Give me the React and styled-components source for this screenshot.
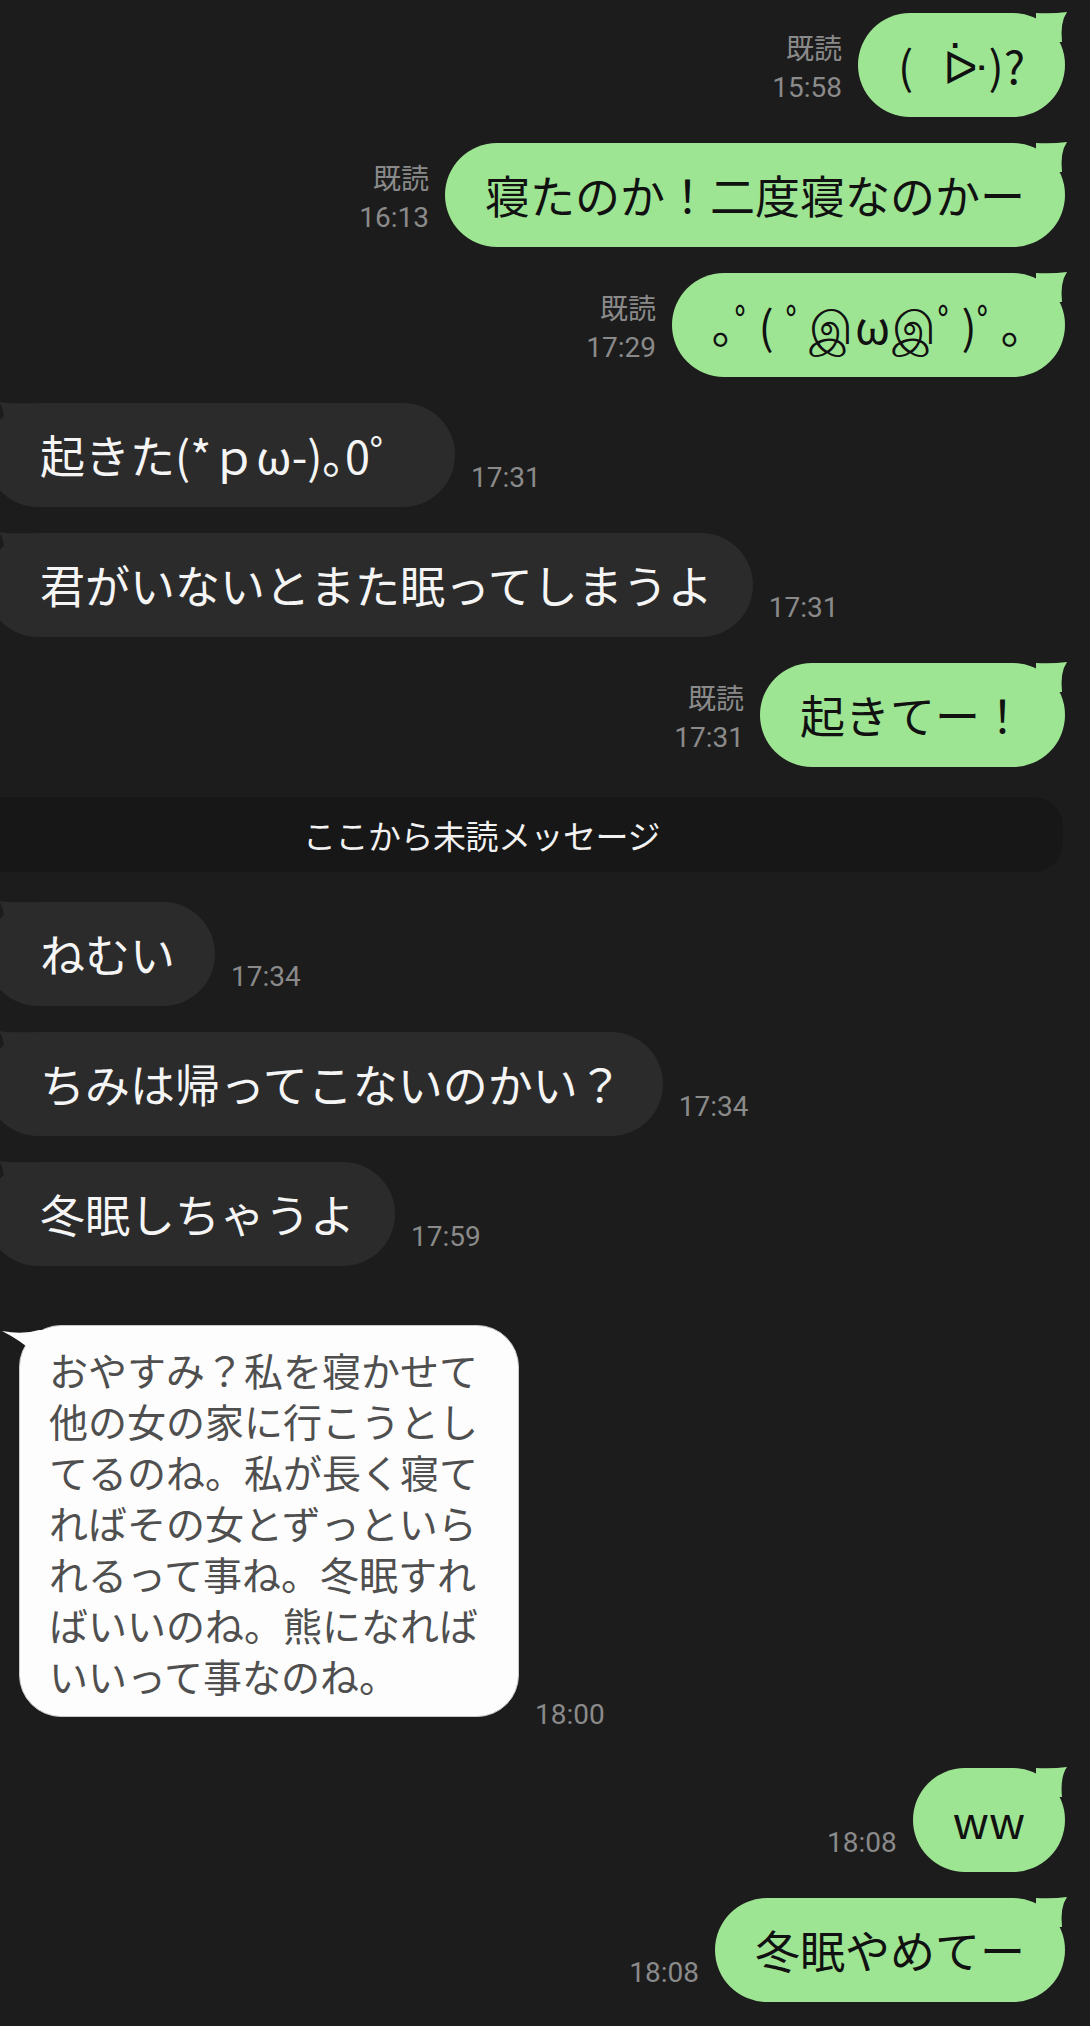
import React from 'react';
import styled, { createGlobalStyle } from 'styled-components';

const GlobalStyle = createGlobalStyle`
  html, body {
    margin: 0;
    padding: 0;
    background: #1c1c1c;
  }
  body {
    font-family: "Noto Sans CJK JP", Roboto, sans-serif;
    overflow-x: hidden;
  }
`;

const Chat = styled.div`
  width: 1090px;
  box-sizing: border-box;
  padding: 13px 25px 0 0;
  display: flex;
  flex-direction: column;
  gap: 26px;
`;

const Row = styled.div`
  display: flex;
  align-items: flex-end;
  justify-content: ${(p) => (p.$out ? 'flex-end' : 'flex-start')};
  gap: 16px;
  margin-top: ${(p) => p.$top || 0}px;
`;

const Meta = styled.div`
  display: flex;
  flex-direction: column;
  align-items: ${(p) => (p.$out ? 'flex-end' : 'flex-start')};
  margin-bottom: ${(p) => (p.$drop ? -17 : 10)}px;
  font-family: Roboto, "Noto Sans CJK JP", sans-serif;
  font-size: 28px;
  line-height: 38px;
  color: #8a8a8a;
  white-space: nowrap;
`;

const Bubble = styled.div`
  position: relative;
  box-sizing: border-box;
  height: 104px;
  display: flex;
  align-items: center;
  padding: 0 40px 0 ${(p) => (p.$out ? '40px' : '54px')};
  margin-left: ${(p) => (p.$out ? 0 : -14)}px;
  border-radius: 52px;
  background: ${(p) => (p.$out ? '#9ee593' : '#2b2b2b')};
  color: ${(p) => (p.$out ? '#111' : '#f5f5f5')};
  font-size: 45px;
  line-height: 60px;
  letter-spacing: ${(p) => p.$spacing || 0}px;
  white-space: pre;
`;

const Tail = styled.svg`
  position: absolute;
  top: -1px;
  width: 32px;
  height: 30px;
  ${(p) => (p.$out ? 'right: -3px;' : 'left: 12px; transform: scaleX(-1);')}
`;

const Divider = styled.div`
  height: 75px;
  margin: 4px 2px 4px 0;
  padding-right: 100px;
  display: flex;
  align-items: center;
  justify-content: center;
  background: #171717;
  border-radius: 0 30px 30px 0;
  color: #f2f2f2;
  font-size: 33px;
  letter-spacing: -0.5px;
`;

const Note = styled.div`
  position: relative;
  margin-left: 19px;
  padding: 18px 40px 15px 29px;
  background: #fdfdfd;
  border: 1px solid #c9c9c9;
  border-radius: 42px;
  color: #4f4f4f;
  font-size: 39px;
  line-height: 51px;
  width: 11em;
`;

const NoteTail = styled.svg`
  position: absolute;
  top: 3px;
  left: -19px;
  width: 44px;
  height: 44px;
`;

function BubbleTail({ out, color }) {
  return (
    <Tail $out={out} viewBox="0 0 32 30">
      <path d="M0 1 Q16 2 31 0 Q24 10 26 30 L0 30 Z" fill={color} />
    </Tail>
  );
}

function Sent({ text, time, read, top, spacing }) {
  return (
    <Row $out $top={top}>
      <Meta $out>
        {read && <span>既読</span>}
        <span>{time}</span>
      </Meta>
      <Bubble $out $spacing={spacing}>
        <BubbleTail out color="#9ee593" />
        {text}
      </Bubble>
    </Row>
  );
}

function Received({ text, time, top }) {
  return (
    <Row $top={top}>
      <Bubble>
        <BubbleTail color="#2b2b2b" />
        {text}
      </Bubble>
      <Meta>
        <span>{time}</span>
      </Meta>
    </Row>
  );
}

export default function App() {
  return (
    <>
      <GlobalStyle />
      <Chat>
        <Sent text="(   ᐕ)?" time="15:58" read />
        <Sent text="寝たのか！二度寝なのかー" time="16:13" read />
        <Sent text="｡ﾟ( ﾟஇωஇﾟ)ﾟ｡" time="17:29" read spacing={1.6} />
        <Received text="起きた(*ｐω-)｡0゜" time="17:31" />
        <Received text="君がいないとまた眠ってしまうよ" time="17:31" />
        <Sent text="起きてー！" time="17:31" read />
        <Divider>ここから未読メッセージ</Divider>
        <Received text="ねむい" time="17:34" />
        <Received text="ちみは帰ってこないのかい？" time="17:34" />
        <Received text="冬眠しちゃうよ" time="17:59" />
        <Row $top={33}>
          <Note>
            <NoteTail viewBox="0 0 44 44">
              <path
                d="M1 2 Q22 6 38 1 L44 1 L44 44 Q40 22 1 2 Z"
                fill="#fdfdfd"
              />
            </NoteTail>
            おやすみ？私を寝かせて他の女の家に行こうとしてるのね。私が長く寝てればその女とずっといられるって事ね。冬眠すればいいのね。熊になればいいって事なのね。
          </Note>
          <Meta $drop>
            <span>18:00</span>
          </Meta>
        </Row>
        <Sent text="ww" time="18:08" top={25} />
        <Sent text="冬眠やめてー" time="18:08" />
      </Chat>
    </>
  );
}
